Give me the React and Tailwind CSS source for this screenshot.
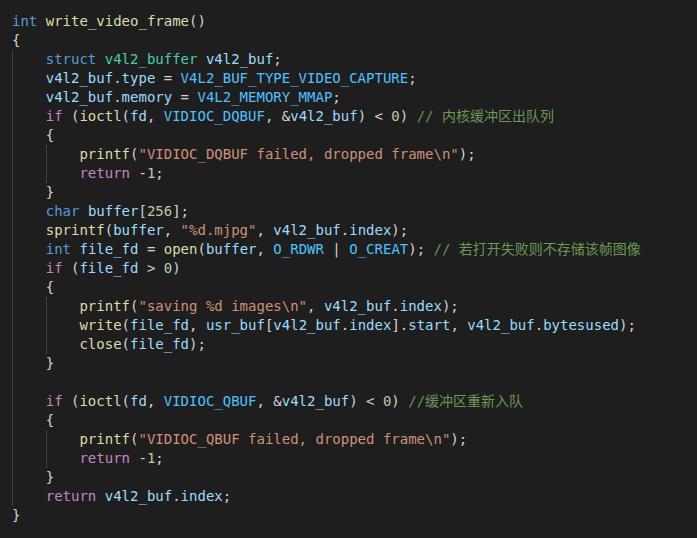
import React from "react";

const C = {
  k: "text-[#569cd6]",
  c: "text-[#c586c0]",
  f: "text-[#dcdcaa]",
  v: "text-[#9cdcfe]",
  t: "text-[#4ec9b0]",
  m: "text-[#4fc1ff]",
  s: "text-[#ce9178]",
  n: "text-[#b5cea8]",
  cm: "text-[#6a9955]",
  p: "text-[#d4d4d4]",
};

const lines = [
  [0, [["k", "int"], " ", ["f", "write_video_frame"], "()"]],
  [0, ["{"]],
  [1, [["k", "struct"], " ", ["t", "v4l2_buffer"], " ", ["v", "v4l2_buf"], ";"]],
  [1, [["v", "v4l2_buf"], ".", ["v", "type"], " = ", ["m", "V4L2_BUF_TYPE_VIDEO_CAPTURE"], ";"]],
  [1, [["v", "v4l2_buf"], ".", ["v", "memory"], " = ", ["m", "V4L2_MEMORY_MMAP"], ";"]],
  [1, [["c", "if"], " (", ["f", "ioctl"], "(", ["v", "fd"], ", ", ["m", "VIDIOC_DQBUF"], ", &", ["v", "v4l2_buf"], ") < ", ["n", "0"], ") ", ["cm", "// 内核缓冲区出队列"]]],
  [1, ["{"]],
  [2, [["f", "printf"], "(", ["s", "\"VIDIOC_DQBUF failed, dropped frame\\n\""], ");"]],
  [2, [["c", "return"], " -", ["n", "1"], ";"]],
  [1, ["}"]],
  [1, [["k", "char"], " ", ["v", "buffer"], "[", ["n", "256"], "];"]],
  [1, [["f", "sprintf"], "(", ["v", "buffer"], ", ", ["s", "\"%d.mjpg\""], ", ", ["v", "v4l2_buf"], ".", ["v", "index"], ");"]],
  [1, [["k", "int"], " ", ["v", "file_fd"], " = ", ["f", "open"], "(", ["v", "buffer"], ", ", ["m", "O_RDWR"], " | ", ["m", "O_CREAT"], "); ", ["cm", "// 若打开失败则不存储该帧图像"]]],
  [1, [["c", "if"], " (", ["v", "file_fd"], " > ", ["n", "0"], ")"]],
  [1, ["{"]],
  [2, [["f", "printf"], "(", ["s", "\"saving %d images\\n\""], ", ", ["v", "v4l2_buf"], ".", ["v", "index"], ");"]],
  [2, [["f", "write"], "(", ["v", "file_fd"], ", ", ["v", "usr_buf"], "[", ["v", "v4l2_buf"], ".", ["v", "index"], "].", ["v", "start"], ", ", ["v", "v4l2_buf"], ".", ["v", "bytesused"], ");"]],
  [2, [["f", "close"], "(", ["v", "file_fd"], ");"]],
  [1, ["}"]],
  [1, []],
  [1, [["c", "if"], " (", ["f", "ioctl"], "(", ["v", "fd"], ", ", ["m", "VIDIOC_QBUF"], ", &", ["v", "v4l2_buf"], ") < ", ["n", "0"], ") ", ["cm", "//缓冲区重新入队"]]],
  [1, ["{"]],
  [2, [["f", "printf"], "(", ["s", "\"VIDIOC_QBUF failed, dropped frame\\n\""], ");"]],
  [2, [["c", "return"], " -", ["n", "1"], ";"]],
  [1, ["}"]],
  [1, [["c", "return"], " ", ["v", "v4l2_buf"], ".", ["v", "index"], ";"]],
  [0, ["}"]],
];

function Indent() {
  return (
    <span className="inline-block h-[19px] align-top shadow-[inset_1px_0_0_#404040]">
      {"    "}
    </span>
  );
}

export default function App() {
  return (
    <div
      className="h-[538px] w-[697px] overflow-hidden bg-[#1e1e1e] pl-3 pt-3 text-[14px] leading-[19px] text-[#d4d4d4] whitespace-pre"
      style={{ fontFamily: '"DejaVu Sans Mono", "Noto Sans CJK SC", monospace' }}
    >
      {lines.map(([lvl, toks], i) => (
        <div key={i} className="h-[19px]">
          {Array.from({ length: lvl }).map((_, j) => (
            <Indent key={j} />
          ))}
          {toks.map((t, j) =>
            typeof t === "string" ? (
              <span key={j} className={C.p}>{t}</span>
            ) : (
              <span key={j} className={C[t[0]]}>{t[1]}</span>
            )
          )}
        </div>
      ))}
    </div>
  );
}
